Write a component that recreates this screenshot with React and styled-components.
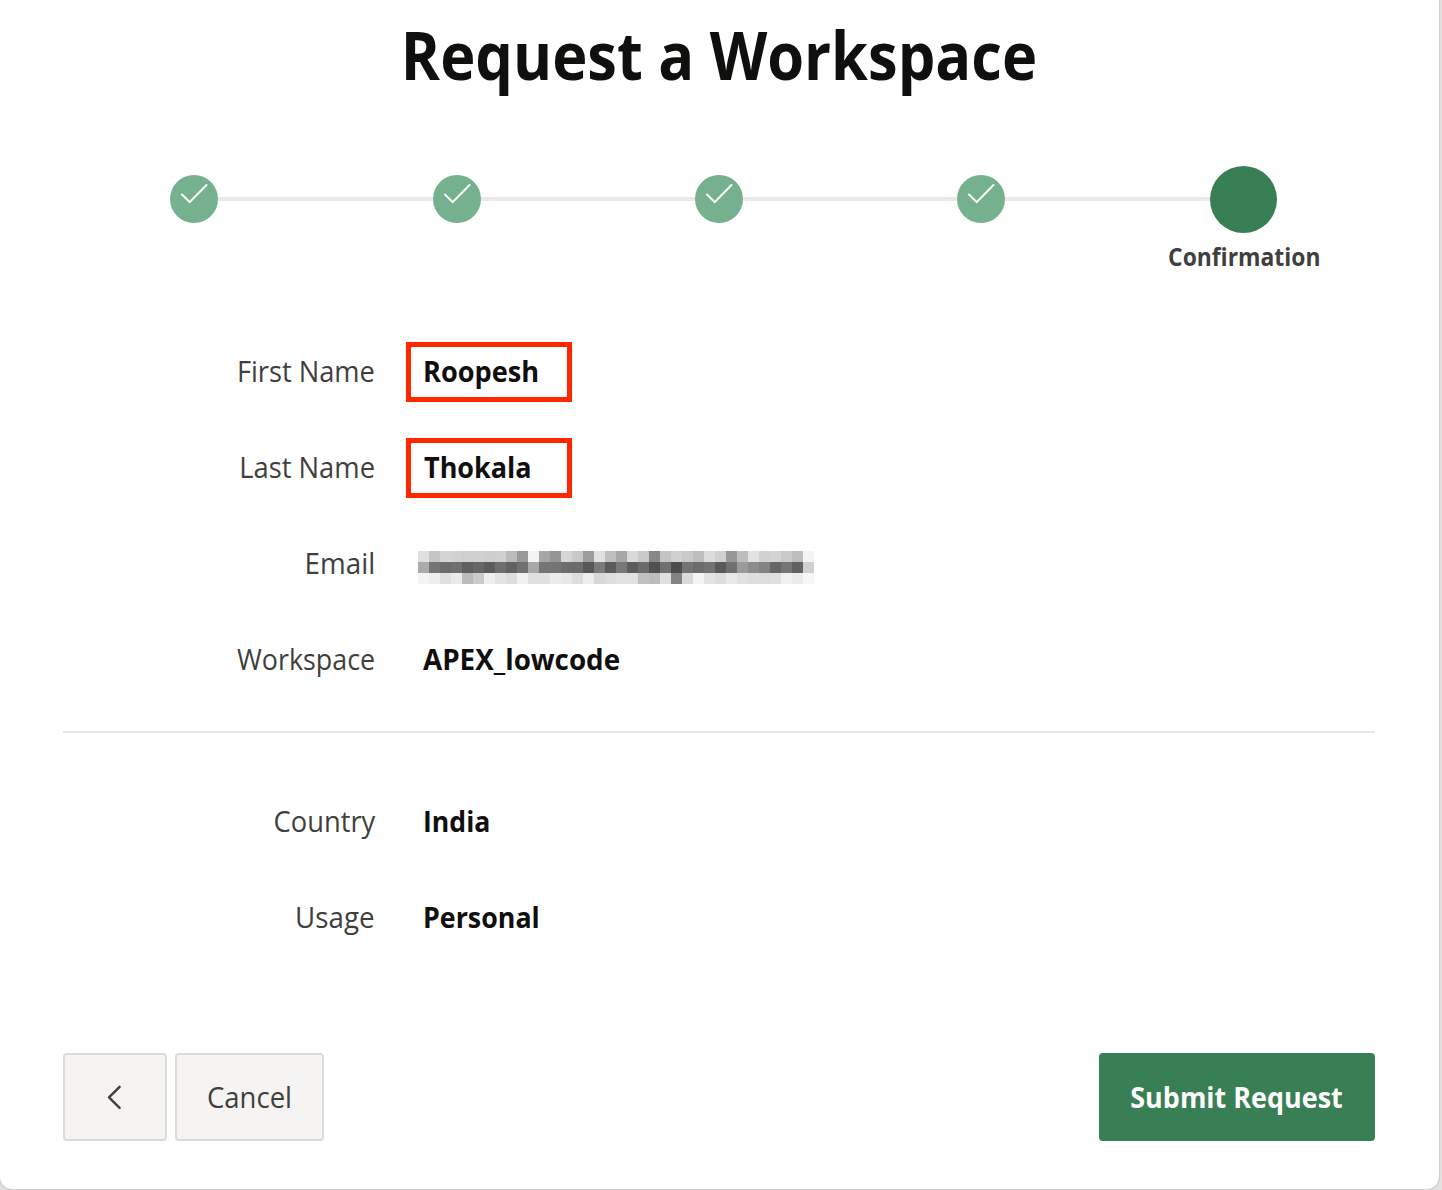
import React from "react";
import styled, { createGlobalStyle } from "styled-components";

const GlobalStyle = createGlobalStyle`
  * { box-sizing: border-box; }
  body {
    margin: 0;
    background: #e3e2e1;
    overflow: hidden;
    font-family: "Open Sans", "Noto Sans", sans-serif;
    color: #403f3e;
  }
`;

const Page = styled.div`
  width: 1442px;
  height: 1190px;
  padding: 0 3px 1px 0;
  overflow: hidden;
`;

const Card = styled.main`
  height: 1189px;
  padding: 0 64px 0 63px;
  background: #fff;
  border-radius: 0 0 12px 12px;
  box-shadow: 0 0 2px rgba(0, 0, 0, 0.32);
`;

/* Slightly condensed text; $scale is the horizontal factor. */
const Text = styled.span`
  display: inline-block;
  white-space: nowrap;
  transform: scaleX(${(p) => p.$scale});
  transform-origin: ${(p) => p.$origin || "center"};
`;

const Title = styled.h1`
  margin: 0;
  height: 165px;
  font-size: 65.5px;
  line-height: 109px;
  font-weight: 700;
  text-align: center;
  color: #100f0e;
`;

const Steps = styled.ol`
  display: grid;
  grid-template-columns: repeat(5, 1fr);
  margin: 0;
  padding: 0;
  height: 159px;
  list-style: none;
`;

const Step = styled.li`
  display: flex;
  flex-direction: column;
  align-items: stretch;
`;

const Track = styled.div`
  display: flex;
  align-items: center;
  height: 68px;
`;

const Connector = styled.span`
  flex: 1;
  height: 4px;
  background: ${(p) => (p.$hidden ? "transparent" : "#ebe9e6")};
`;

const Marker = styled.span`
  width: ${(p) => (p.$current ? 67 : 48)}px;
  height: ${(p) => (p.$current ? 67 : 48)}px;
  border-radius: 50%;
  background: ${(p) => (p.$current ? "#387f55" : "#75b18f")};

  svg { display: block; }
`;

const StepLabel = styled.span`
  font-size: 25px;
  line-height: 47px;
  font-weight: 700;
  text-align: center;
`;

const Fields = styled.dl`
  margin: 0;
`;

const Field = styled.div`
  display: grid;
  grid-template-columns: 312px 1fr;
  column-gap: 31px;
  align-items: center;
  height: 96px;
`;

const Label = styled.dt`
  padding-bottom: 2px;
  font-size: 28.8px;
  line-height: 40px;
  text-align: right;
`;

const Value = styled.dd`
  display: flex;
  align-items: center;
  width: ${(p) => (p.$marked ? "166px" : "auto")};
  height: 60px;
  margin: 0;
  padding: 0 0 2px ${(p) => p.$indent || 11.5}px;
  border: 5px solid ${(p) => (p.$marked ? "#ff2600" : "transparent")};
  font-size: 28.8px;
  line-height: 40px;
  font-weight: 700;
  color: #100f0e;
`;

const Mosaic = styled.div`
  display: grid;
  grid-template-columns: repeat(36, 11px);
  grid-auto-rows: 11px;
  margin: 9px 0 0 -4.5px;
`;

const Cell = styled.i`
  background: ${(p) => p.$tone};
`;

const Divider = styled.hr`
  height: 2px;
  margin: 23px 0 41px;
  border: 0;
  background: #e8e7e4;
`;

const Actions = styled.footer`
  display: flex;
  gap: 8px;
  margin-top: 87px;
`;

const Button = styled.button`
  display: flex;
  align-items: center;
  justify-content: center;
  width: ${(p) => p.$width}px;
  height: 88px;
  margin: 0;
  padding: 0;
  border: 2px solid ${(p) => (p.$primary ? "#387f55" : "#dddbd8")};
  border-radius: 4px;
  background: ${(p) => (p.$primary ? "#387f55" : "#f5f4f2")};
  color: ${(p) => (p.$primary ? "#fffdfb" : "#403f3e")};
  font-family: inherit;
  font-size: 28.8px;
  font-weight: ${(p) => (p.$primary ? 700 : 400)};
  line-height: 40px;
  margin-left: ${(p) => (p.$primary ? "auto" : 0)};
`;

const MOSAIC = [
  "e0c5d4d2d0d0ced0bb99f3a694d6c89ce0bf" + "a7d9c988c3d0c9bddcd198bde3d1d3c9bdf4",
  "ab756c705f675b6e626fa874746d6c567b5b" + "785d6b50704c746c7359709b8c83677562d0",
  "f4ede0eabbcbeee3ddf1e0e1ece8ddedd8dd" + "e1e1c0bce083daf4e3dde8e1dddde0f0ecf6",
].flatMap((row) => row.match(/../g));

const personal = [
  { label: "First Name", ls: 0.946, value: "Roopesh", vs: 0.943, marked: true },
  { label: "Last Name", ls: 0.95, value: "Thokala", vs: 0.937, marked: true, indent: 12.6 },
  { label: "Email", ls: 0.965 },
  { label: "Workspace", ls: 0.933, value: "APEX_lowcode", vs: 0.965, indent: 11.8 },
];

const details = [
  { label: "Country", ls: 0.948, value: "India", vs: 0.925 },
  { label: "Usage", ls: 0.963, value: "Personal", vs: 0.931 },
];

function FieldList({ items }) {
  return (
    <Fields>
      {items.map((f) => (
        <Field key={f.label}>
          <Label>
            <Text $scale={f.ls} $origin="right">{f.label}</Text>
          </Label>
          <Value $marked={f.marked} $indent={f.indent}>
            {f.value ? (
              <Text $scale={f.vs} $origin="left">{f.value}</Text>
            ) : (
              <Mosaic>
                {MOSAIC.map((c, i) => <Cell key={i} $tone={`#${c}${c}${c}`} />)}
              </Mosaic>
            )}
          </Value>
        </Field>
      ))}
    </Fields>
  );
}

export default function App() {
  return (
    <Page>
      <GlobalStyle />
      <Card>
        <Title><Text $scale={0.909}>Request a Workspace</Text></Title>
        <Steps>
          {[0, 1, 2, 3, 4].map((i) => (
            <Step key={i}>
              <Track>
                <Connector $hidden={i === 0} />
                <Marker $current={i === 4}>
                  {i < 4 && (
                    <svg width="48" height="48" viewBox="0 0 48 48" fill="none" stroke="#fff" strokeWidth="2" strokeLinecap="round">
                      <path d="M12 19.5 19.7 27.2 36.5 10" />
                    </svg>
                  )}
                </Marker>
                <Connector $hidden={i === 4} />
              </Track>
              {i === 4 && <StepLabel><Text $scale={0.915}>Confirmation</Text></StepLabel>}
            </Step>
          ))}
        </Steps>
        <FieldList items={personal} />
        <Divider />
        <FieldList items={details} />
        <Actions>
          <Button $width={104} aria-label="Back">
            <svg width="28" height="28" viewBox="0 0 28 28" fill="none" stroke="#403f3e" strokeWidth="2.4" strokeLinecap="round" strokeLinejoin="round">
              <path d="M18.6 3.8 8 14.3 18.6 24.8" />
            </svg>
          </Button>
          <Button $width={149}><Text $scale={0.955}>Cancel</Text></Button>
          <Button $width={276} $primary><Text $scale={0.936}>Submit Request</Text></Button>
        </Actions>
      </Card>
    </Page>
  );
}
